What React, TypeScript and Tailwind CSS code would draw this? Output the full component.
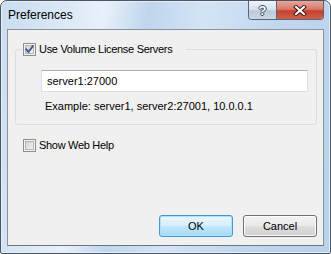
import React from "react";

const font = "font-['Liberation_Sans',Arial,sans-serif]";

function CheckBox({ checked }: { checked?: boolean }) {
  return (
    <svg width="13" height="13" viewBox="0 0 13 13" className="shrink-0">
      <defs>
        <linearGradient id={checked ? "cbg1" : "cbg2"} x1="0" y1="0" x2="1" y2="1">
          <stop offset="0" stopColor="#cbcfd5" />
          <stop offset="1" stopColor="#f7f7f7" />
        </linearGradient>
      </defs>
      <rect x="0.5" y="0.5" width="12" height="12" fill="#f4f4f4" stroke="#8e8f8f" />
      <rect x="2.5" y="2.5" width="8" height="8" fill={`url(#${checked ? "cbg1" : "cbg2"})`} stroke="#b2b6bc" />
      {checked && (
        <path d="M3.2 6.4 L5.4 8.9 L9.9 3.2" fill="none" stroke="#4a5c8a" strokeWidth="1.9" strokeLinecap="square" />
      )}
    </svg>
  );
}

function CaptionButtons() {
  return (
    <div className="flex h-[19px] rounded-b-[4px] border border-t-0 border-[#5a6678] overflow-hidden">
      <div className="w-[28px] h-full flex items-center justify-center bg-[linear-gradient(#eef3f8,#d9e3ee_45%,#bccadb_55%,#cad7e6)] border-r border-[#5a6678]">
        <span className={`${font} font-bold text-[13px] leading-none text-white [text-shadow:1px_0_0_#3a4658,-1px_0_0_#3a4658,0_1px_0_#3a4658,0_-1px_0_#3a4658]`}>
          ?
        </span>
      </div>
      <div className="w-[46px] h-full flex items-center justify-center bg-[linear-gradient(#e8a597,#d77c6b_45%,#c4412e_55%,#d0604c)]">
        <svg width="14" height="11" viewBox="0 0 14 11">
          <path d="M3 2 L11 9 M11 2 L3 9" stroke="#3d1a16" strokeWidth="4" strokeLinecap="square" />
          <path d="M3 2 L11 9 M11 2 L3 9" stroke="#ffffff" strokeWidth="2" strokeLinecap="square" />
        </svg>
      </div>
    </div>
  );
}

export default function App() {
  return (
    <div
      className={`${font} w-[331px] h-[254px] flex flex-col rounded-t-[7px] rounded-b-[2px] border border-[#4b5564] shadow-[inset_0_0_0_1px_#e6eef7] bg-[linear-gradient(100deg,#c9dcf0_0%,#dbe8f6_18%,#e8f1fa_28%,#bfd6ee_40%,#d3e4f5_55%,#c1d7ef_75%,#b9d1ea_100%)] text-black`}
    >
      <div className="h-[28px] flex items-start justify-between pl-[7px] pr-[6px]">
        <span className="mt-[7px] text-[12px] leading-[15px] text-black">Preferences</span>
        <CaptionButtons />
      </div>
      <div className="mx-[6px] h-[217px] border border-[#8a929c] border-b-[#6b737d] bg-[#f0f0f0] flex flex-col text-[11px] leading-[13px]">
        <fieldset className="ml-[7px] mt-[13px] w-[302px] border border-[#d5dfe5] rounded-[3px] px-0 pb-[11px]">
          <legend className="ml-[6px] pl-[1px] pr-[14px] h-[13px] flex items-center gap-[3px]">
            <CheckBox checked />
            <span className="tracking-[-0.3px]">Use Volume License Servers</span>
          </legend>
          <div className="ml-[25px] mt-[14px] w-[267px] h-[22px] border border-[#dbdfe6] border-t-[#abadb3] bg-white flex items-center pl-[5px] text-[11px]">
            server1:27000
          </div>
          <div className="mt-[8px] ml-[29px]">Example: server1, server2:27001, 10.0.0.1</div>
        </fieldset>
        <div className="ml-[15px] mt-[14px] flex items-center gap-[3px] h-[13px]">
          <CheckBox />
          <span className="tracking-[-0.3px]">Show Web Help</span>
        </div>
        <div className="mt-auto mb-[8px] mr-[6px] flex justify-end gap-[10px]">
          <button className="w-[74px] h-[22px] rounded-[3px] border border-[#3c9ad5] shadow-[inset_0_0_0_1px_#b3e0f9] bg-[linear-gradient(#eaf6fd,#d9f0fc_45%,#bee6fd_55%,#a7d9f5)] text-[11px]">
            OK
          </button>
          <button className="w-[74px] h-[22px] rounded-[3px] border border-[#707070] shadow-[inset_0_0_0_1px_#fcfcfc] bg-[linear-gradient(#f2f2f2,#ebebeb_45%,#dddddd_55%,#cfcfcf)] text-[11px]">
            Cancel
          </button>
        </div>
      </div>
    </div>
  );
}
